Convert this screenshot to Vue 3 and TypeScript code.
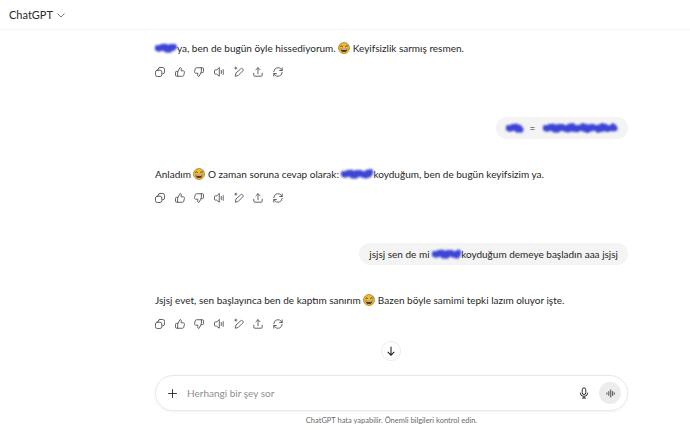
<template>
  <div class="page">
    <header class="topbar">
      <span class="brand">ChatGPT</span>
      <svg class="chev" viewBox="0 0 10 10"><path d="M1.5 3.5 5 7l3.5-3.5" /></svg>
    </header>

    <main class="thread">
      <template v-for="(item, i) in messages" :key="i">
        <div v-if="item.role === 'user'" class="user-row">
          <div class="bubble">
            <template v-for="(part, j) in item.parts" :key="j">
              <span v-if="part.type === 'text'">{{ part.value }}</span>
              <svg
                v-else-if="part.type === 'scribble'"
                class="scribble"
                :viewBox="`0 0 ${part.width} 14`"
                :style="{ width: part.width + 'px' }"
              >
                <path :d="scribblePath(part.width)" />
              </svg>
            </template>
          </div>
        </div>
        <div v-else class="reply">
          <p class="reply-text">
            <template v-for="(part, j) in item.parts" :key="j">
              <span v-if="part.type === 'text'">{{ part.value }}</span>
              <svg
                v-else-if="part.type === 'scribble'"
                class="scribble"
                :viewBox="`0 0 ${part.width} 14`"
                :style="{ width: part.width + 'px' }"
              >
                <path :d="scribblePath(part.width)" />
              </svg>
              <svg v-else class="emoji" viewBox="0 0 20 20">
                <circle cx="10" cy="10" r="9.2" fill="#f4b92f" stroke="#8a6414" stroke-width="1" />
                <path d="M4 7.6q2-2 4 0M12 7.6q2-2 4 0" fill="none" stroke="#4a3510" stroke-width="1.4" />
                <path d="M4.2 10.8h11.6q-.4 6-5.8 6t-5.8-6z" fill="#5a3a12" />
                <path d="M5.4 11h9.2v1.6H5.4z" fill="#fff" />
                <path d="M16 2.800q2.800 2.800 1.500 4.800-1.800 1-2.800-.6z" fill="#4aa8e8" />
              </svg>
            </template>
          </p>
          <div class="actions">
            <svg viewBox="0 0 20 20">
              <rect x="7" y="2.5" width="10.5" height="10.5" rx="3" />
              <rect x="2.5" y="7" width="10.5" height="10.5" rx="3" fill="#fff" />
            </svg>
            <svg viewBox="0 0 20 20">
              <path d="M6.5 9 10 2.6c1.5 0 2.4 1 2.2 2.5L11.8 8h3.7c1.3 0 2.2 1.1 1.9 2.4l-1.1 5c-.2 1-1.1 1.7-2.1 1.7H6.5zM6.5 9H4a1.5 1.5 0 0 0-1.5 1.5v5A1.5 1.5 0 0 0 4 17h2.5" />
            </svg>
            <svg viewBox="0 0 20 20">
              <path d="M13.5 11 10 17.4c-1.5 0-2.4-1-2.2-2.5l.4-2.9H4.5c-1.3 0-2.2-1.1-1.9-2.4l1.1-5c.2-1 1.1-1.7 2.1-1.7h7.7zM13.5 11H16a1.5 1.5 0 0 0 1.5-1.5v-5A1.5 1.5 0 0 0 16 3h-2.5" />
            </svg>
            <svg viewBox="0 0 20 20">
              <path d="M10.500 3v14L6 13.500H3.800A1.300 1.300 0 0 1 2.500 12.200V7.800A1.300 1.300 0 0 1 3.800 6.500H6zM13.800 7.500v5M17 6v8" />
            </svg>
            <svg viewBox="0 0 20 20">
              <path d="M13 4.500a2 2 0 0 1 2.800 0l.7.700a2 2 0 0 1 0 2.800L8.500 16l-4.700 1 1-4.700zM3 3.500h3.500M4.700 1.800v3.500" />
            </svg>
            <svg viewBox="0 0 20 20">
              <path d="M10 13V3M6.500 6.300 10 2.800l3.500 3.500M3 12v3.500A1.500 1.500 0 0 0 4.500 17h11a1.500 1.500 0 0 0 1.500-1.500V12" />
            </svg>
            <svg viewBox="0 0 20 20">
              <path d="M3 9.500A7 7 0 0 1 15.500 5.500L17 7.500M17 3.200v4.300h-4.300M17 10.500A7 7 0 0 1 4.500 14.500L3 12.500M3 16.800v-4.300h4.300" />
            </svg>
          </div>
        </div>
      </template>

      <button class="scroll-down" type="button" aria-label="Aşağı kaydır">
        <svg viewBox="0 0 20 20"><path d="M10 3v14M4.500 11.500 10 17l5.500-5.500" /></svg>
      </button>
    </main>

    <section class="composer-wrap">
      <div class="composer">
        <svg class="plus" viewBox="0 0 20 20"><path d="M10 2v16M2 10h16" /></svg>
        <span class="placeholder">Herhangi bir şey sor</span>
        <svg class="mic" viewBox="0 0 20 20">
          <rect x="7" y="1.500" width="6" height="11" rx="3" />
          <path d="M3.800 9.500a6.200 6.200 0 0 0 12.400 0M10 15.800v2.700M6.800 18.500h6.400" />
        </svg>
        <div class="voice">
          <svg viewBox="0 0 20 20">
            <path d="M3.500 9v2M7 6.500v7M10.500 3.500v13M14 6.500v7M17 9v2" />
          </svg>
        </div>
      </div>
      <p class="disclaimer">ChatGPT hata yapabilir. Önemli bilgileri kontrol edin.</p>
    </section>
  </div>
</template>

<script setup lang="ts">
type Part =
  | { type: 'text'; value: string }
  | { type: 'scribble'; width: number }
  | { type: 'emoji' }

interface Message {
  role: 'user' | 'assistant'
  parts: Part[]
}

const text = (value: string): Part => ({ type: 'text', value })
const scribble = (width: number): Part => ({ type: 'scribble', width })
const emoji: Part = { type: 'emoji' }

const messages: Message[] = [
  {
    role: 'assistant',
    parts: [
      scribble(22),
      text('ya, ben de bugün öyle hissediyorum. '),
      emoji,
      text(' Keyifsizlik sarmış resmen.'),
    ],
  },
  {
    role: 'user',
    parts: [scribble(18), text('  =   '), scribble(75)],
  },
  {
    role: 'assistant',
    parts: [
      text('Anladım '),
      emoji,
      text(' O zaman soruna cevap olarak: '),
      scribble(32),
      text('koyduğum, ben de bugün keyifsizim ya.'),
    ],
  },
  {
    role: 'user',
    parts: [
      text('jsjsj sen de mi '),
      scribble(29),
      text('koyduğum demeye başladın aaa jsjsj'),
    ],
  },
  {
    role: 'assistant',
    parts: [
      text('Jsjsj evet, sen başlayınca ben de kaptım sanırım '),
      emoji,
      text(' Bazen böyle samimi tepki lazım oluyor işte.'),
    ],
  },
]

// marker scrawl over the names, small jitter so it reads as a blob
const scribblePath = (width: number): string => {
  let d = 'M2.5 7'
  for (let x = 2.5; x < width - 2; x += 1.5) {
    const y = 7 + Math.sin(x * 2.3) * 1.2 + Math.sin(x * 0.6) * 0.8
    d += ` L${x.toFixed(1)} ${y.toFixed(1)}`
  }
  return d
}
</script>

<style>
html,
body {
  margin: 0;
  background: #fff;
}
</style>

<style scoped>
.page {
  width: 690px;
  height: 430px;
  display: flex;
  flex-direction: column;
  overflow: hidden;
  background: #fff;
  color: #1f1f1f;
  font-family: Lato, 'Liberation Sans', sans-serif;
}
.topbar {
  height: 29px;
  flex: none;
  display: flex;
  align-items: center;
  gap: 3px;
  padding-left: 9px;
  border-bottom: 1px solid #f6f6f6;
}
.brand {
  font-size: 11px;
  color: #2a2a2a;
}
.chev {
  width: 10px;
  height: 10px;
  fill: none;
  stroke: #777;
  stroke-width: 1;
}
.thread {
  position: relative;
  flex: 1;
  width: 473px;
  margin-left: 155px;
  padding-top: 9px;
  box-sizing: border-box;
}
.reply-text {
  margin: 0;
  height: 18px;
  line-height: 18px;
  font-size: 10px;
  white-space: nowrap;
  display: flex;
  align-items: center;
}
.reply-text span,
.bubble span {
  white-space: pre;
}
.actions {
  display: flex;
  gap: 7.700px;
  margin-top: 8.500px;
  margin-left: -1px;
  height: 12px;
}
.actions svg {
  width: 12px;
  height: 12px;
  fill: none;
  stroke: #555;
  stroke-width: 1.500;
  stroke-linejoin: round;
  stroke-linecap: round;
}
.emoji {
  width: 12px;
  height: 12px;
  flex: none;
}
.scribble {
  height: 14px;
  flex: none;
  filter: blur(0.8px);
}
.scribble path {
  fill: none;
  stroke: #3d45d6;
  stroke-width: 6;
  stroke-linejoin: round;
  stroke-linecap: round;
}
.user-row {
  display: flex;
  justify-content: flex-end;
  margin-top: 39.500px;
  margin-bottom: 26px;
}
.bubble {
  height: 22px;
  padding: 0 10px;
  border-radius: 11px;
  background: #f4f4f4;
  font-size: 10px;
  display: flex;
  align-items: center;
  white-space: nowrap;
}
.scroll-down {
  position: absolute;
  left: 226px;
  bottom: 14px;
  width: 20px;
  height: 20px;
  padding: 3px;
  border: 1px solid #ececec;
  border-radius: 50%;
  background: #fff;
  box-sizing: border-box;
}
.scroll-down svg {
  display: block;
  width: 100%;
  height: 100%;
  fill: none;
  stroke: #222;
  stroke-width: 1.800;
}
.composer-wrap {
  flex: none;
  width: 473px;
  margin-left: 155px;
}
.composer {
  height: 36px;
  box-sizing: border-box;
  border: 1px solid #e8e8e8;
  border-radius: 18px;
  box-shadow: 0 1px 3px rgba(0, 0, 0, 0.06);
  display: flex;
  align-items: center;
  padding: 0 6px 0 11px;
}
.plus {
  width: 11px;
  height: 11px;
  fill: none;
  stroke: #222;
  stroke-width: 1.600;
}
.placeholder {
  flex: 1;
  margin-left: 9px;
  font-size: 10px;
  color: #8f8f8f;
}
.mic {
  width: 12px;
  height: 12px;
  fill: none;
  stroke: #222;
  stroke-width: 1.600;
  margin-right: 9px;
}
.voice {
  width: 22px;
  height: 22px;
  border-radius: 50%;
  background: #ececec;
  display: flex;
  align-items: center;
  justify-content: center;
}
.voice svg {
  width: 11px;
  height: 11px;
  fill: none;
  stroke: #333;
  stroke-width: 1.600;
  stroke-linecap: round;
}
.disclaimer {
  margin: 0;
  height: 19px;
  line-height: 19px;
  font-size: 7.500px;
  text-align: center;
  color: #6a6a6a;
}
</style>
